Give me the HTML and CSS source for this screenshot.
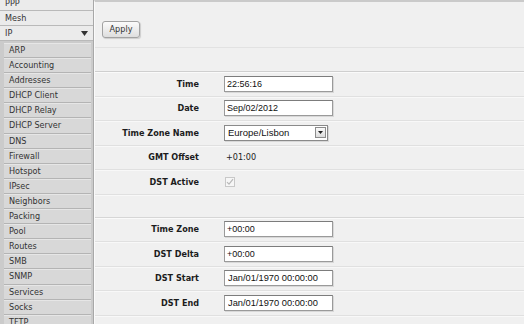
FILE: index.html
```html
<!DOCTYPE html>
<html lang="en">
<head>
    <meta charset="UTF-8">
    <meta name="viewport" content="width=device-width, initial-scale=1.0">
    <title>Clock</title>
    <link rel="stylesheet" href="styles.css">
</head>
<body>
    <div class="layout">
        <nav class="sidebar">
            <div class="menu">
                <div class="menu-item">PPP</div>
                <div class="menu-item">Mesh</div>
                <div class="menu-item open">
                    <span>IP</span>
                    <svg class="caret" width="7" height="5" viewBox="0 0 7 5"><path d="M0 0h7L3.5 5z" fill="#333"/></svg>
                </div>
                <div class="submenu">
                    <div class="sub-item">ARP</div>
                    <div class="sub-item">Accounting</div>
                    <div class="sub-item">Addresses</div>
                    <div class="sub-item">DHCP Client</div>
                    <div class="sub-item">DHCP Relay</div>
                    <div class="sub-item">DHCP Server</div>
                    <div class="sub-item">DNS</div>
                    <div class="sub-item">Firewall</div>
                    <div class="sub-item">Hotspot</div>
                    <div class="sub-item">IPsec</div>
                    <div class="sub-item">Neighbors</div>
                    <div class="sub-item">Packing</div>
                    <div class="sub-item">Pool</div>
                    <div class="sub-item">Routes</div>
                    <div class="sub-item">SMB</div>
                    <div class="sub-item">SNMP</div>
                    <div class="sub-item">Services</div>
                    <div class="sub-item">Socks</div>
                    <div class="sub-item">TFTP</div>
                </div>
            </div>
        </nav>

        <main class="content">
            <div class="toolbar">
                <button type="button" class="btn">Apply</button>
            </div>
            <div class="blank first"></div>

            <div class="form-row">
                <label class="field-label">Time</label>
                <div class="field"><input class="text-input" type="text" value="22:56:16"></div>
            </div>
            <div class="form-row">
                <label class="field-label">Date</label>
                <div class="field"><input class="text-input" type="text" value="Sep/02/2012"></div>
            </div>
            <div class="form-row">
                <label class="field-label">Time Zone Name</label>
                <div class="field">
                    <div class="select">
                        <span class="select-value">Europe/Lisbon</span>
                        <span class="select-arrow">
                            <svg width="5" height="3" viewBox="0 0 5 3"><path d="M0 0h5L2.5 3z" fill="#222"/></svg>
                        </span>
                    </div>
                </div>
            </div>
            <div class="form-row">
                <label class="field-label">GMT Offset</label>
                <div class="field"><span class="static-value">+01:00</span></div>
            </div>
            <div class="form-row">
                <label class="field-label">DST Active</label>
                <div class="field">
                    <span class="checkbox">
                        <svg width="8" height="8" viewBox="0 0 8 8"><path d="M1 4.2l2 2L7 1.2" fill="none" stroke="#b8b8b8" stroke-width="1.2"/></svg>
                    </span>
                </div>
            </div>
            <div class="blank"></div>

            <div class="form-row">
                <label class="field-label">Time Zone</label>
                <div class="field"><input class="text-input" type="text" value="+00:00"></div>
            </div>
            <div class="form-row">
                <label class="field-label">DST Delta</label>
                <div class="field"><input class="text-input" type="text" value="+00:00"></div>
            </div>
            <div class="form-row">
                <label class="field-label">DST Start</label>
                <div class="field"><input class="text-input readonly" type="text" value="Jan/01/1970 00:00:00" readonly></div>
            </div>
            <div class="form-row">
                <label class="field-label">DST End</label>
                <div class="field"><input class="text-input readonly" type="text" value="Jan/01/1970 00:00:00" readonly></div>
            </div>
        </main>
    </div>
</body>
</html>
```

FILE: styles.css
```css
body {
    margin: 0;
    padding: 0;
    font-family: 'DejaVu Sans Condensed', 'DejaVu Sans', sans-serif;
    color: #222;
    background-color: #f0f0f0;
    overflow: hidden;
}

.layout {
    display: flex;
    height: 324px;
    overflow: hidden;
}

/* left menu */
.sidebar {
    width: 93px;
    flex-shrink: 0;
    border-right: 1px solid #a8a8a8;
    background-color: #cdcdcd;
    overflow: hidden;
}

.menu {
    margin-top: -4px;
}

.menu-item {
    display: flex;
    justify-content: space-between;
    align-items: center;
    height: 14px;
    padding: 0 4px 0 5px;
    font-size: 9px;
    color: #333;
    background-color: #ebebeb;
    border-bottom: 1px solid #b9b9b9;
}

.caret {
    margin-right: 1px;
}

.submenu {
    padding: 2px 2px 0 4px;
    background-color: #cbcbcb;
}

.sub-item {
    height: 13.1px;
    line-height: 13px;
    padding-left: 5px;
    font-size: 9px;
    color: #333;
    background-color: #d8d8d8;
    border-top: 1px solid #e6e6e6;
    border-bottom: 1px solid #b4b4b4;
}

/* main panel */
.content {
    flex: 1;
    border-top: 2px solid #cacaca;
    border-left: 1px solid #fafafa;
}

.toolbar {
    height: 46px;
    padding: 15px 0 0 7px;
    box-sizing: border-box;
    border-bottom: 1px solid #e2e2e2;
}

.btn {
    height: 17px;
    width: 38px;
    padding: 0;
    font-family: 'DejaVu Sans Condensed', 'DejaVu Sans', sans-serif;
    font-size: 9px;
    color: #333;
    background: linear-gradient(#fbfbfb, #dedede);
    border: 1px solid #a2a2a2;
    border-radius: 3px;
    box-shadow: 1px 1px 1px rgba(0, 0, 0, 0.15);
}

.blank {
    height: 22px;
    border-bottom: 1px solid #d6d6d6;
    box-shadow: 0 1px 0 #fafafa;
}

.blank.first {
    height: 23px;
    border-bottom-color: #cfcfcf;
}

.form-row {
    display: flex;
    align-items: center;
    height: 23.5px;
    border-bottom: 1px solid #e0e0e0;
    box-shadow: 0 1px 0 #f8f8f8;
}

.field-label {
    width: 104px;
    text-align: right;
    font-size: 9px;
    font-weight: bold;
    color: #1c1c1c;
}

.field {
    padding-left: 25px;
    display: flex;
    align-items: center;
}

.text-input {
    width: 109px;
    height: 16px;
    box-sizing: border-box;
    padding: 0 2px;
    font-family: 'Liberation Sans', Arial, sans-serif;
    font-size: 9px;
    color: #111;
    background-color: white;
    border: 1px solid #9a9a9a;
    border-top-color: #7c7c7c;
    box-shadow: 1px 1px 0 #d8d8d8;
    outline: none;
}

.text-input.readonly {
    padding-left: 3px;
    font-size: 9.3px;
}

.select {
    display: flex;
    align-items: center;
    justify-content: space-between;
    width: 104px;
    height: 16px;
    box-sizing: border-box;
    padding: 0 1px 0 3px;
    background-color: white;
    border: 1px solid #8a8a8a;
    box-shadow: 1px 1px 0 #d8d8d8;
}

.select-value {
    font-family: 'Liberation Sans', Arial, sans-serif;
    font-size: 9.5px;
    color: #111;
}

.select-arrow {
    display: flex;
    align-items: center;
    justify-content: center;
    width: 11px;
    height: 11px;
    box-sizing: border-box;
    border: 1px solid #8c8c8c;
    background: linear-gradient(#fafafa, #dcdcdc);
}

.static-value {
    padding-left: 2px;
    font-size: 9px;
    color: #222;
}

.checkbox {
    display: flex;
    align-items: center;
    justify-content: center;
    width: 10px;
    height: 10px;
    margin-left: 1px;
    box-sizing: border-box;
    border: 1px solid #c8c8c8;
    background-color: #f6f6f6;
}
```
